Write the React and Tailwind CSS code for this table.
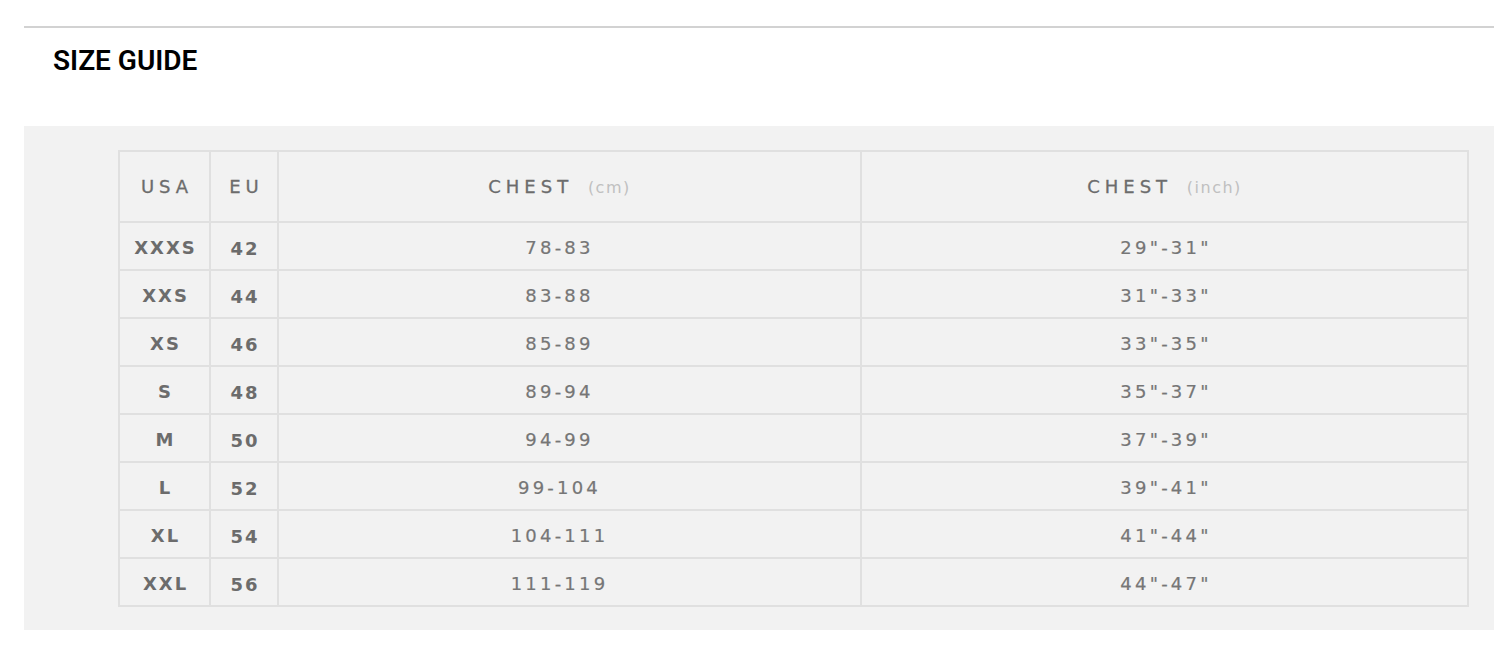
import React from 'react';

const rows = [
  ['XXXS', '42', '78-83', '29"-31"'],
  ['XXS', '44', '83-88', '31"-33"'],
  ['XS', '46', '85-89', '33"-35"'],
  ['S', '48', '89-94', '35"-37"'],
  ['M', '50', '94-99', '37"-39"'],
  ['L', '52', '99-104', '39"-41"'],
  ['XL', '54', '104-111', '41"-44"'],
  ['XXL', '56', '111-119', '44"-47"'],
];

const tableFont = { fontFamily: '"DejaVu Sans", "Open Sans", sans-serif' };

export default function App() {
  return (
    <div className="bg-white w-[1494px] h-[656px] pt-[26px] pl-[24px]">
      <div className="border-t-2 border-[#d2d2d2]">
        <h1 className="pl-[29px] pt-[19px] h-[98px] text-[28px] leading-none font-semibold text-black" style={{ fontFamily: 'Roboto, sans-serif' }}>
          SIZE GUIDE
        </h1>
        <div className="bg-[#f2f2f2] pt-[24px] pb-[23px] pl-[94px] pr-[27px]">
          <table className="w-[1349px] border-collapse table-fixed" style={tableFont}>
            <colgroup>
              <col className="w-[91px]" />
              <col className="w-[68px]" />
              <col className="w-[583px]" />
              <col className="w-[607px]" />
            </colgroup>
            <thead>
              <tr className="h-[71px]">
                <th className="border-2 border-[#e0e0e0] pl-[5px] text-[18px] font-normal tracking-[5px] text-[#6c6c6c] text-center [-webkit-text-stroke:0.3px_#6c6c6c]">USA</th>
                <th className="border-2 border-[#e0e0e0] pl-[5px] text-[18px] font-normal tracking-[5px] text-[#6c6c6c] text-center [-webkit-text-stroke:0.3px_#6c6c6c]">EU</th>
                <th className="border-2 border-[#e0e0e0] pr-[20px] text-[18px] font-normal tracking-[5px] text-[#6c6c6c] text-center [-webkit-text-stroke:0.3px_#6c6c6c]">
                  CHEST <span className="ml-[4px] text-[16px] tracking-[1.5px] text-[#c0c0c0] [-webkit-text-stroke:0px]">(cm)</span>
                </th>
                <th className="border-2 border-[#e0e0e0] text-[18px] font-normal tracking-[5px] text-[#6c6c6c] text-center [-webkit-text-stroke:0.3px_#6c6c6c]">
                  CHEST <span className="ml-[4px] text-[16px] tracking-[1.5px] text-[#c0c0c0] [-webkit-text-stroke:0px]">(inch)</span>
                </th>
              </tr>
            </thead>
            <tbody>
              {rows.map((r) => (
                <tr key={r[0]} className="h-[48px]">
                  <td className="border-2 border-[#e0e0e0] pt-[3px] pl-[2px] text-center text-[18px] font-bold tracking-[2px] text-[#6c6c6c]">{r[0]}</td>
                  <td className="border-2 border-[#e0e0e0] pt-[4px] pl-[2px] text-center text-[18px] font-bold tracking-[2px] text-[#6c6c6c]">{r[1]}</td>
                  <td className="border-2 border-[#e0e0e0] pt-[2px] pr-[20px] text-center text-[18px] tracking-[3.2px] text-[#767676] [-webkit-text-stroke:0.2px_#767676]">{r[2]}</td>
                  <td className="border-2 border-[#e0e0e0] pt-[2px] pl-[3px] text-center text-[18px] tracking-[3.2px] text-[#767676] [-webkit-text-stroke:0.2px_#767676]">{r[3]}</td>
                </tr>
              ))}
            </tbody>
          </table>
        </div>
      </div>
    </div>
  );
}
